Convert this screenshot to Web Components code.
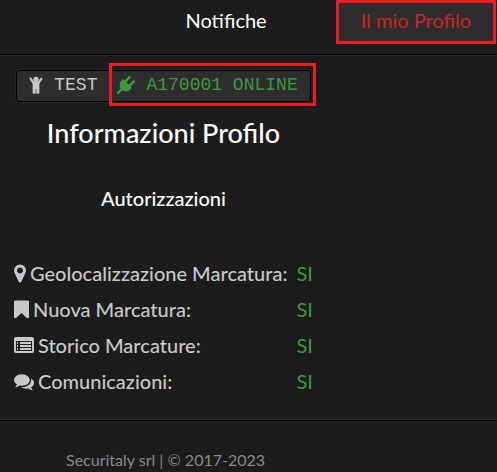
<!DOCTYPE html>
<html lang="it">
<head>
<meta charset="utf-8">
<meta name="viewport" content="width=device-width, initial-scale=1">
<title>Il mio Profilo</title>
<style>
  body {
    margin: 0;
    background: #1c1c1c;
    color: #c8c8c8;
    font-family: Lato, "Liberation Sans", sans-serif;
    font-size: 20px;
    line-height: 24px;
  }
</style>
</head>
<body>
<profile-page></profile-page>

<script>
// Icon shapes, each with its own view box and width
const ICONS = {
  marker: {
    box: '384 0 1024 1792', width: 12, height: 21,
    shape: '<path d="M1152 640q0-106-75-181t-181-75-181 75-75 181 75 181 181 75 181-75 75-181zm256 0q0 109-33 179l-364 774q-16 33-47.5 52t-67.5 19-67.5-19-46.5-52l-365-774q-33-70-33-179 0-212 150-362t362-150 362 150 150 362z"/>'
  },
  bookmark: {
    box: '256 0 1280 1792', width: 15, height: 21,
    shape: '<path d="M1420 128q23 0 44 9 33 13 52.5 41t19.5 62v1289q0 34-19.5 62t-52.5 41q-19 8-44 8-48 0-83-32l-441-424-441 424q-36 33-83 33-23 0-44-9-33-13-52.5-41t-19.5-62v-1289q0-34 19.5-62t52.5-41q21-9 44-9h1048z"/>'
  },
  list: {
    box: '0 0 20 21', width: 20, height: 21,
    shape: '<path fill-rule="evenodd" d="M2 2h16a2 2 0 0 1 2 2v12a2 2 0 0 1-2 2H2a2 2 0 0 1-2-2V4a2 2 0 0 1 2-2zM2 6v10h16V6z"/><path d="M3 7h1v2H3zM6 7h11v2H6zM3 10h1v2H3zM6 10h11v2H6zM3 13h1v2H3zM6 13h11v2H6z"/>'
  },
  comments: {
    box: '0 0 1792 1792', width: 20, height: 21,
    shape: '<path d="M1408 768q0 139-94 257t-256.5 186.5-353.5 68.5q-86 0-176-16-124 88-278 128-36 9-86 16h-3q-11 0-20.5-8t-11.5-21q-1-3-1-6.5t.5-6.5 2-6l2.5-5 3.5-5.5 4-5 4.5-5 4-4.5q5-6 23-25t26-29.5 22.5-29 25-38.5 20.5-44q-124-72-195-177t-71-224q0-139 94-257t256.5-186.5 353.5-68.5 353.5 68.5 256.5 186.5 94 257zm384 256q0 120-71 224.5t-195 176.5q10 24 20.5 44t25 38.5 22.5 29 26 29.5 23 25q1 1 4 4.5t4.5 5 4 5 3.5 5.5l2.5 5 2 6 .5 6.5-1 6.5q-3 14-13 22t-22 7q-50-7-86-16-154-40-278-128-90 16-176 16-271 0-472-132 58 4 88 4 161 0 309-45t264-129q125-92 192-212t67-254q0-77-23-152 129 71 204 178t75 230z"/>'
  },
  plug: {
    box: '0 0 1792 1792', width: 18, height: 18,
    shape: '<path d="M1755 453q37 38 37 90.5t-37 90.5l-401 400 150 150-160 160q-163 163-389.5 186.5t-411.5-100.5l-362 362h-181v-181l362-362q-124-185-100.5-411.5t186.5-389.5l160-160 150 150 400-401q38-37 91-37t90 37 37 90.5-37 90.5l-400 401 234 234 401-400q38-37 91-37t90 37z"/>'
  },
  child: {
    box: '0 0 14 18', width: 14, height: 18,
    shape: '<circle cx="7" cy="3.300" r="2.600"/><path d="M1 1.600a1.100 1.100 0 0 1 1.500.4L4.800 5.500h4.400l2.300-3.500a1.100 1.100 0 0 1 1.800 1.200L10.400 7.800V16.500a1.200 1.200 0 0 1-1.400 1.200h-1.200a.6.6 0 0 1-.5-.6V13h-.6v4.100a.6.6 0 0 1-.5.6H5a1.200 1.200 0 0 1-1.400-1.200V7.800L.7 3.200A1.100 1.100 0 0 1 1 1.600z"/>'
  }
};

class UiIcon extends HTMLElement {
  constructor() {
    super();
    this.attachShadow({ mode: 'open' });
  }

  connectedCallback() {
    const icon = ICONS[this.getAttribute('name')];
    if (!icon) return;
    this.shadowRoot.innerHTML = `
      <style>
        :host { display: inline-flex; flex: none; }
        svg { display: block; fill: currentColor; }
      </style>
      <svg viewBox="${icon.box}" width="${icon.width}" height="${icon.height}" aria-hidden="true">${icon.shape}</svg>`;
  }
}

class NavBar extends HTMLElement {
  constructor() {
    super();
    this.attachShadow({ mode: 'open' }).innerHTML = `
      <style>
        :host {
          display: block;
          border-bottom: 1px solid #000;
          box-shadow: 0 1px #2c2c2c;
        }
        nav {
          display: flex;
          justify-content: flex-end;
          align-items: flex-start;
          gap: 44px;
          padding: 0 1px 10px 0;
        }
      </style>
      <nav><slot></slot></nav>`;
  }
}

class NavLink extends HTMLElement {
  constructor() {
    super();
    this.attachShadow({ mode: 'open' }).innerHTML = `
      <style>
        :host { display: block; }
        a {
          display: block;
          padding: 5px 22px 9px;
          border: 3px solid transparent;
          color: #fff;
          text-decoration: none;
        }
        :host([active]) a {
          background: #2d2d2d;
          border-color: #ed1c24;
          color: #cb2027;
        }
      </style>
      <a href="#"><slot></slot></a>`;
  }
}

class StatusBadge extends HTMLElement {
  constructor() {
    super();
    this.attachShadow({ mode: 'open' }).innerHTML = `
      <style>
        :host {
          display: flex;
          align-items: center;
          gap: 20px;
          padding: 2px 12px 4px;
          border: 1px solid #000;
          border-radius: 4px;
          background: #2d2d2d;
          box-shadow: 0 0 0 1px #252525;
          font-family: "Courier New", "Liberation Mono", monospace;
          font-size: 18px;
        }
        span { display: flex; align-items: center; gap: 11px; }
        .device { position: relative; color: #419641; }
        /* frame drawn over the badge, around the device part */
        .device::after {
          content: "";
          position: absolute;
          inset: -10px -18px -9px -8px;
          border: 3px solid #ed1c24;
        }
      </style>
      <span><ui-icon name="child"></ui-icon><slot name="user"></slot></span>
      <span class="device"><ui-icon name="plug"></ui-icon><slot name="device"></slot></span>`;
  }
}

class PermissionRow extends HTMLElement {
  constructor() {
    super();
    this.attachShadow({ mode: 'open' });
  }

  connectedCallback() {
    this.shadowRoot.innerHTML = `
      <style>
        :host {
          display: flex;
          justify-content: space-between;
          gap: 9px;
          padding: 6px 0;
        }
        .label { display: flex; align-items: center; gap: 4px; font-weight: 500; }
        .value { color: #419641; }
      </style>
      <span class="label"><ui-icon name="${this.getAttribute('icon')}"></ui-icon><slot></slot></span>
      <span class="value">${this.getAttribute('value')}</span>`;
  }
}

class PageFooter extends HTMLElement {
  constructor() {
    super();
    this.attachShadow({ mode: 'open' }).innerHTML = `
      <style>
        :host {
          display: block;
          border-top: 1px solid #2c2c2c;
          box-shadow: inset 0 1px #000;
          color: #888;
          font-size: 16px;
        }
        footer { padding: 28px 66px 0; }
      </style>
      <footer><slot></slot></footer>`;
  }
}

class ProfilePage extends HTMLElement {
  constructor() {
    super();
    this.attachShadow({ mode: 'open' }).innerHTML = `
      <style>
        :host { display: block; }
        main {
          display: flex;
          flex-direction: column;
          align-items: center;
          width: fit-content;
          padding: 15px 14px 20px;
        }
        h1, h2 { margin: 0; color: #fff; font-weight: 500; }
        h1 { margin-top: 13px; font-size: 27px; line-height: 36px; }
        h2 { margin-top: 35px; font-size: 20px; line-height: 24px; }
        section { align-self: stretch; margin-top: 45px; }
      </style>
      <nav-bar>
        <nav-link>Notifiche</nav-link>
        <nav-link active>Il mio Profilo</nav-link>
      </nav-bar>
      <main>
        <status-badge>
          <span slot="user">TEST</span>
          <span slot="device">A170001 ONLINE</span>
        </status-badge>
        <h1>Informazioni Profilo</h1>
        <h2>Autorizzazioni</h2>
        <section>
          <permission-row icon="marker" value="SI">Geolocalizzazione Marcatura:</permission-row>
          <permission-row icon="bookmark" value="SI">Nuova Marcatura:</permission-row>
          <permission-row icon="list" value="SI">Storico Marcature:</permission-row>
          <permission-row icon="comments" value="SI">Comunicazioni:</permission-row>
        </section>
      </main>
      <page-footer>Securitaly srl | © 2017-2023</page-footer>`;
  }
}

customElements.define('ui-icon', UiIcon);
customElements.define('nav-bar', NavBar);
customElements.define('nav-link', NavLink);
customElements.define('status-badge', StatusBadge);
customElements.define('permission-row', PermissionRow);
customElements.define('page-footer', PageFooter);
customElements.define('profile-page', ProfilePage);
</script>
</body>
</html>
